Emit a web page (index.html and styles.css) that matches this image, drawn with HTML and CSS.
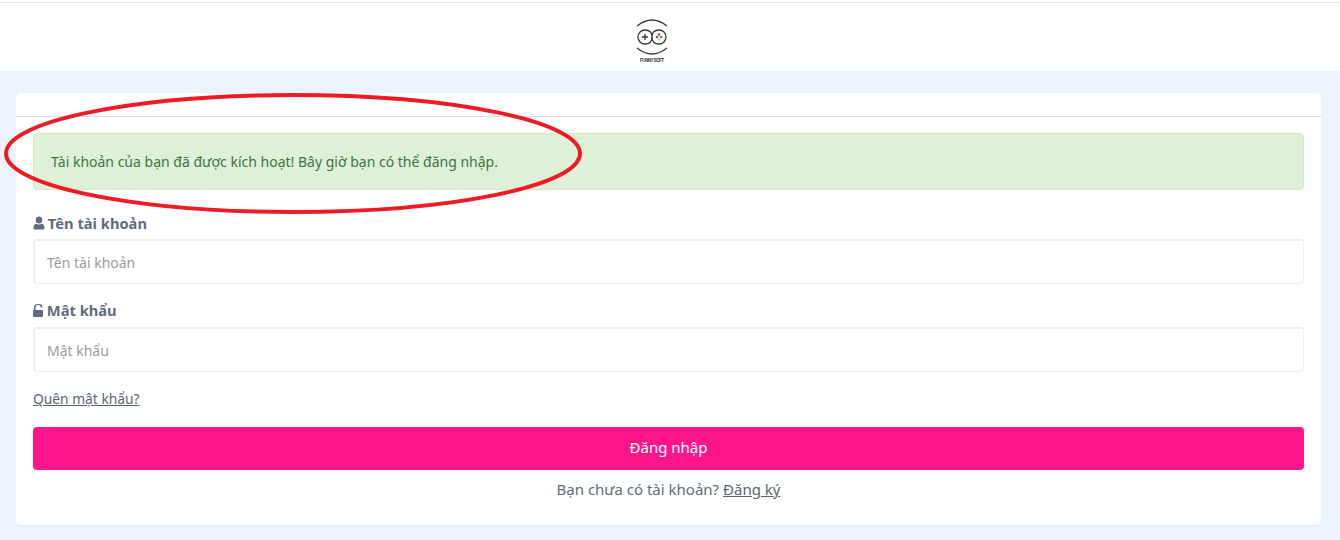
FILE: index.html
```html
<!DOCTYPE html>
<html lang="vi">
<head>
  <meta charset="UTF-8">
  <title>Đăng nhập</title>
  <link rel="stylesheet" href="styles.css">
</head>
<body>
  <header class="site-head">
    <div class="topbar">
      <svg class="logo" viewBox="0 0 40 48" width="40" height="48" aria-label="Funny Soft">
        <path d="M5 10 Q20 -2 35 10" fill="none" stroke="#3a3a3a" stroke-width="1.300"/>
        <path d="M5 32 Q20 44 35 32" fill="none" stroke="#3a3a3a" stroke-width="1.300"/>
        <path d="M13 14 C18 14 20 17 20 21 C20 25 22 28 27 28 A7 7 0 0 0 27 14 C22 14 20 17 20 21 C20 25 18 28 13 28 A7 7 0 0 1 13 14 Z" fill="none" stroke="#3a3a3a" stroke-width="1.300"/>
        <path d="M10 21 H16 M13 18 V24" stroke="#3a3a3a" stroke-width="1.300"/>
        <circle cx="27" cy="18.500" r="1.300" fill="#d33"/>
        <circle cx="25" cy="21" r="1.300" fill="#3a5fd0"/>
        <circle cx="29" cy="21" r="1.300" fill="#3a3"/>
        <circle cx="27" cy="23.500" r="1.300" fill="#ec3"/>
        <text x="8" y="45.500" class="logo-text" textLength="24">FUNNY SOFT</text>
      </svg>
    </div>
  </header>

  <main class="page">
    <div class="card">
      <div class="card-head"></div>
      <div class="card-body">
        <div class="alert">Tài khoản của bạn đã được kích hoạt! Bây giờ bạn có thể đăng nhập.</div>

        <label class="field-label" for="user">
          <svg class="icon" viewBox="0 0 12 14" width="12" height="14"><path d="M6 0.500 A3.300 3.500 0 0 1 6 7.500 A3.300 3.500 0 0 1 6 0.500 Z M3 7.500 Q6 9.500 9 7.500 Q11.500 8.500 11.500 12 Q11.500 13.500 10 13.500 H2 Q0.500 13.500 0.500 12 Q0.500 8.500 3 7.500 Z" fill="#5f6b7c"/></svg>
          Tên tài khoản
        </label>
        <input class="field" id="user" type="text" placeholder="Tên tài khoản">

        <label class="field-label" for="pass">
          <svg class="icon" viewBox="0 0 11 13" width="11" height="13"><path d="M2.500 6 V3.500 A2.600 2.600 0 0 1 7.700 3.500 H9.400 A4.200 3.400 0 0 0 1 3.500 V6 Z" fill="#5f6b7c"/><rect x="0" y="6" width="10" height="7" rx="1" fill="#5f6b7c"/></svg>
          Mật khẩu
        </label>
        <input class="field field-pass" id="pass" type="password" placeholder="Mật khẩu">

        <p class="forgot"><a href="#">Quên mật khẩu?</a></p>
        <button class="submit" type="button">Đăng nhập</button>
        <p class="signup">Bạn chưa có tài khoản? <a href="#">Đăng ký</a></p>
      </div>
    </div>
  </main>

  <!-- vong tron do ve tay de len tren -->
  <svg class="mark" width="590" height="130" viewBox="0 0 590 130">
    <ellipse cx="293" cy="60.500" rx="287" ry="58.500" fill="none" stroke="#ed1c24" stroke-width="4"/>
  </svg>
</body>
</html>
```

FILE: styles.css
```css
* { box-sizing: border-box; }

html, body { height: 100%; }

body {
  margin: 0;
  font-family: "Noto Sans", Tahoma, sans-serif;
  font-size: 14px;
  color: #5f6b7c;
  background: #ebf3fd;
  overflow: hidden;
  position: relative;
}

.site-head {
  height: 71px;
  padding-top: 2px;
  background: #fff;
}
.topbar {
  border-top: 1px solid #e3e3e3;
  display: flex;
  justify-content: center;
  padding: 13px 36px 0 0;
}
.logo { display: block; }
.logo-text { font-size: 4.600px; font-weight: 700; fill: #333; font-family: "Liberation Sans", sans-serif; }

.page { padding: 22px 19px 0 16px; }

.card {
  background: #fff;
  border-radius: 5px;
  height: 433px;
  border-bottom: 1px solid #e3e9f0;
}
.card-head {
  height: 24px;
  border-bottom: 1px solid #dedede;
}
.card-body { padding: 16px 17px; }

.alert {
  height: 57px;
  padding: 0 17px;
  display: flex;
  align-items: center;
  background: #dff0d8;
  border: 1px solid #d6e9c6;
  border-radius: 4px;
  color: #3c763d;
}

.field-label {
  display: block;
  margin-top: 25px;
  height: 18px;
  line-height: 16px;
  font-weight: 700;
  font-size: 14.700px;
}
.icon { vertical-align: -1px; margin-right: -1px; }

.field {
  display: block;
  width: 100%;
  height: 45px;
  margin-top: 6px;
  padding: 0 12px;
  border: 1px solid #eeeeee;
  border-top-width: 2px;
  border-left-width: 2px;
  border-radius: 4px;
  font: inherit;
  color: #5f6b7c;
  background: #fff;
}
.field::placeholder { color: #9a9a9a; opacity: 1; }
.field + .field-label { margin-top: 18px; }
.field-pass { margin-top: 7px; }

.forgot {
  margin: 17px 0 0;
  line-height: 20px;
  font-size: 13.800px;
}
.forgot a, .signup a { color: #5a6474; text-decoration: underline; }

.submit {
  display: block;
  width: 100%;
  height: 43px;
  margin-top: 18px;
  padding: 0 0 3px;
  border: 0;
  border-radius: 4px;
  background: #ff158a;
  color: #fff;
  font: inherit;
  font-size: 15px;
}

.signup {
  margin: 9px 0 0;
  text-align: center;
  font-size: 15px;
  line-height: 20px;
}

.mark {
  position: absolute;
  left: 0;
  top: 93px;
  pointer-events: none;
}
```
